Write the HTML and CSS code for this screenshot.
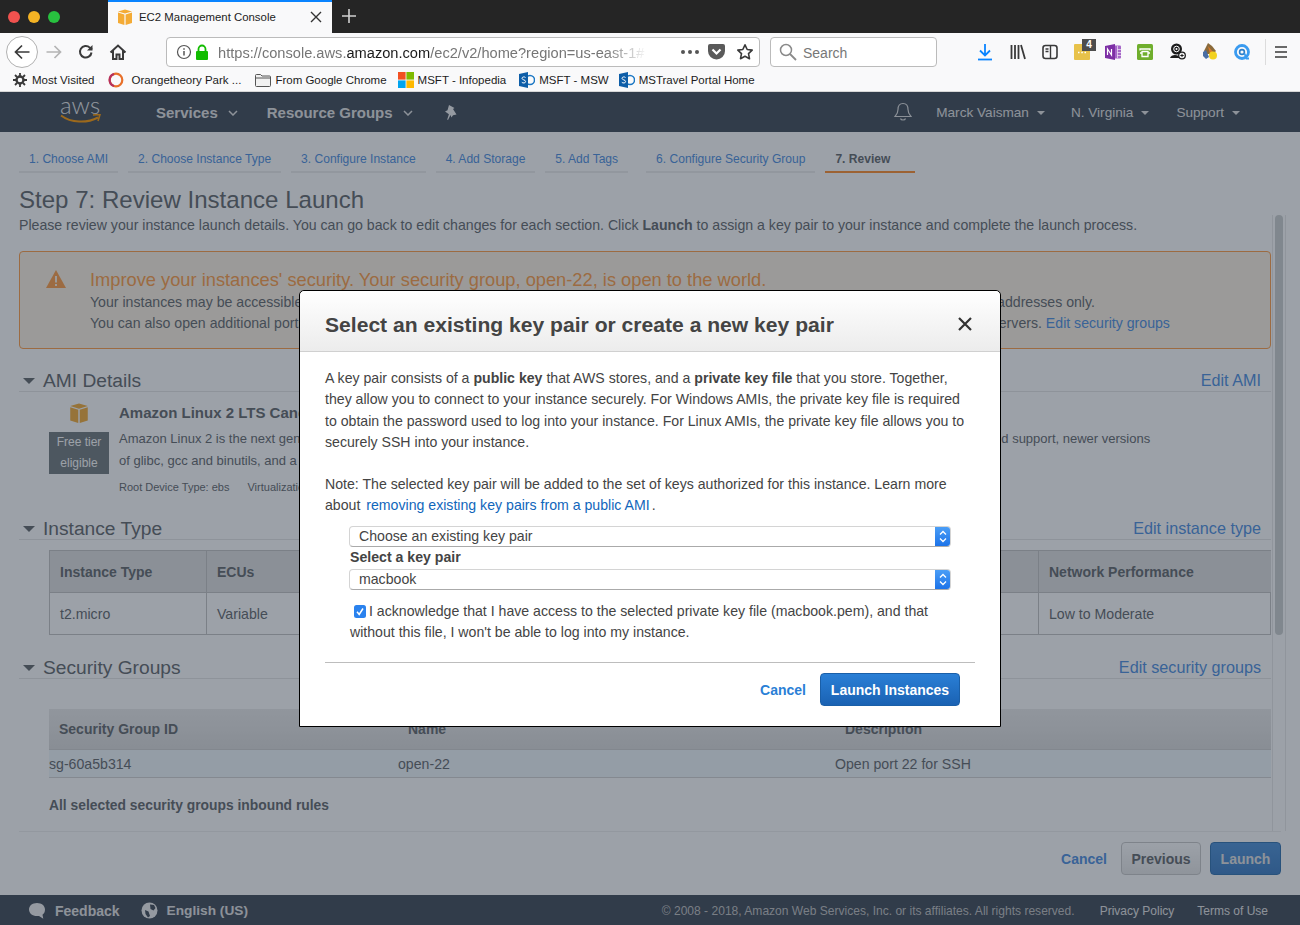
FILE: index.html
```html
<!DOCTYPE html>
<html lang="en">
<head>
  <meta charset="UTF-8" />
  <title>EC2 Management Console</title>
  <link rel="stylesheet" href="styles.css">
</head>
<body>
  <!-- browser chrome -->
  <div class="tabbar">
    <div class="lights"><i class="red"></i><i class="amber"></i><i class="green"></i></div>
    <div class="tab">
      <svg class="fav" width="16" height="16" viewBox="0 0 16 16"><path fill="#f4ab35" d="M8 4.6 1 2.4 8 .4l7 2zM1 3.4l6.400 2V16L1 14zM15 3.400l-6.400 2V16l6.400-2z"/></svg>
      <span class="tab-title">EC2 Management Console</span>
      <svg class="tab-close" width="12" height="12" viewBox="0 0 12 12"><path d="M1 1l10 10M11 1 1 11" stroke="#333" stroke-width="1.400"/></svg>
    </div>
    <svg class="tab-new" width="16" height="16" viewBox="0 0 16 16"><path d="M8 1v14M1 8h14" stroke="#d0d0d0" stroke-width="1.600"/></svg>
  </div>

  <div class="toolbar">
    <div class="back">
      <svg width="18" height="18" viewBox="0 0 18 18"><path d="M16.500 9H2.500M9 2.500 2.500 9 9 15.500" fill="none" stroke="#3a3a3a" stroke-width="1.700"/></svg>
    </div>
    <svg class="nav-icon" width="18" height="18" viewBox="0 0 18 18"><path d="M1.500 9h14M9.500 3l6 6-6 6" fill="none" stroke="#b4b4b4" stroke-width="1.700"/></svg>
    <svg class="nav-icon" width="18" height="18" viewBox="0 0 18 18"><path d="M14.500 9.500A5.800 5.800 0 1 1 12.800 4.600L15 6.500" fill="none" stroke="#3a3a3a" stroke-width="2"/><path d="M15.500 2v5.500H10z" fill="#3a3a3a"/></svg>
    <svg class="nav-icon" width="18" height="18" viewBox="0 0 18 18"><path d="M1.500 9.500 9 2.500l7.500 7M4 7.500V16h3.500v-4.500h3V16H14V7.500" fill="none" stroke="#3a3a3a" stroke-width="2"/></svg>
    <div class="urlbar">
      <svg width="16" height="16" viewBox="0 0 16 16"><circle cx="8" cy="8" r="6.500" fill="none" stroke="#555" stroke-width="1.200"/><path d="M8 7v4.500M8 4.200v1.600" stroke="#555" stroke-width="1.500"/></svg>
      <svg class="lock" width="14" height="16" viewBox="0 0 14 16"><rect x="1" y="7" width="12" height="9" rx="1" fill="#12bc00"/><path d="M3.500 7.500V5a3.500 3.500 0 0 1 7 0v2.500" fill="none" stroke="#12bc00" stroke-width="1.800"/></svg>
      <div class="url">https://console.aws.<b>amazon.com</b>/ec2/v2/home?region=us-east-1#</div>
      <div class="dots"><i></i><i></i><i></i></div>
      <svg class="pocket" width="17" height="16" viewBox="0 0 17 16"><path fill="#5a5a5a" d="M2 0h13a2 2 0 0 1 2 2v5a8.500 8.500 0 0 1-17 0V2a2 2 0 0 1 2-2z"/><path d="M4.500 5.500l4 4 4-4" fill="none" stroke="#fff" stroke-width="2.200"/></svg>
      <svg class="star" width="18" height="18" viewBox="0 0 18 18"><path d="M9 1.800l2.200 4.700 5 .6-3.700 3.500 1 5.100L9 13.200l-4.500 2.500 1-5.100L1.800 7.100l5-.6z" fill="none" stroke="#3a3a3a" stroke-width="1.600" stroke-linejoin="round"/></svg>
    </div>
    <div class="searchbar">
      <svg width="18" height="18" viewBox="0 0 18 18"><circle cx="7" cy="7" r="5.500" fill="none" stroke="#8a8a8a" stroke-width="1.500"/><path d="M11 11l6 6" stroke="#8a8a8a" stroke-width="1.800"/></svg>
      <span>Search</span>
    </div>
    <div class="extensions">
      <svg width="16" height="18" viewBox="0 0 16 18"><path d="M8 1v11M3 7.500l5 5 5-5" fill="none" stroke="#0a84ff" stroke-width="1.800"/><path d="M1 16.500h14" stroke="#0a84ff" stroke-width="1.800"/></svg>
      <svg class="library" width="16" height="16" viewBox="0 0 16 16"><path d="M1.500 1v14M5 1v14M8.500 1v14M11 1l4 14" fill="none" stroke="#3a3a3a" stroke-width="1.800"/></svg>
      <svg width="16" height="16" viewBox="0 0 16 16"><rect x="1" y="1.500" width="14" height="13" rx="2.500" fill="none" stroke="#3a3a3a" stroke-width="1.600"/><path d="M8.500 2v12M3.500 5h3M3.500 7.500h3" stroke="#3a3a3a" stroke-width="1.400"/></svg>
      <div class="ext-badged">
        <svg width="16" height="16" viewBox="0 0 16 16"><rect width="16" height="16" rx="1" fill="#e8c24a"/><path d="M4 8.500h1.500M7.300 8.500h1.500M10.500 8.500H12" stroke="#fff" stroke-width="1.500"/></svg>
        <span class="badge">4</span>
      </div>
      <svg class="onenote" width="16" height="16" viewBox="0 0 16 16"><path fill="#a667c8" d="M9 1.500h6a1 1 0 0 1 1 1v11a1 1 0 0 1-1 1H9z"/><path fill="#7d2fa5" d="M0 2l10-2v16L0 14z"/><path d="M12.500 2v12M12.500 5.500H16M12.500 8.500H16M12.500 11.500H16" stroke="#fff" stroke-width=".6"/><path d="M2.500 11V5l4 6V5" fill="none" stroke="#fff" stroke-width="1.200"/></svg>
      <svg width="16" height="16" viewBox="0 0 16 16"><rect width="16" height="16" rx="1.500" fill="#6fae2c"/><path d="M3 6.500V5h10v1.500M5 7.500h6v5H5zM3 9h2M11 9h2" fill="none" stroke="#fff" stroke-width="1.300"/></svg>
      <svg width="17" height="17" viewBox="0 0 17 17"><circle cx="7.500" cy="6" r="5.500" fill="#1c1c1c"/><circle cx="7.500" cy="6" r="2.800" fill="none" stroke="#fff" stroke-width="1"/><circle cx="7.500" cy="6" r="1" fill="#fff"/><path d="M1 15c1-4 9-4 10 0z" fill="#1c1c1c"/><circle cx="13" cy="12.500" r="3.300" fill="#fff" stroke="#1c1c1c" stroke-width="1.300"/><path d="M13 10.800v3.400M11.300 12.500h3.400" stroke="#1c1c1c" stroke-width="1"/></svg>
      <svg width="16" height="17" viewBox="0 0 16 17"><path fill="#8a6a3a" d="M6 0l4 3 4 5-3 3H4L2 8z"/><path fill="#4a6fa5" d="M1 9l3-2 3 7-3 2-3-3z"/><path fill="#d9792b" d="M6 3l5 6-3 2z"/><circle cx="11" cy="12.500" r="4" fill="#f3d21f"/></svg>
      <svg width="16" height="16" viewBox="0 0 16 16"><circle cx="8" cy="8" r="6.500" fill="none" stroke="#3a9bf0" stroke-width="2.800"/><circle cx="8" cy="8" r="2.400" fill="none" stroke="#2d7fc9" stroke-width="1.600"/><path d="M10.500 9.500l2 5H15" stroke="#3a9bf0" stroke-width="1.800" fill="none"/></svg>
      <i class="ext-sep"></i>
      <svg width="14" height="14" viewBox="0 0 14 14"><path d="M1 2h12M1 7h12M1 12h12" stroke="#3a3a3a" stroke-width="1.700"/></svg>
    </div>
  </div>

  <div class="bookmarks">
    <a class="mark"><svg width="14" height="14" viewBox="0 0 14 14"><circle cx="7" cy="7" r="3.500" fill="none" stroke="#3a3a3a" stroke-width="2.400"/><path d="M7 0v3M7 11v3M0 7h3M11 7h3M2 2l2 2M10 10l2 2M12 2l-2 2M4 10l-2 2" stroke="#3a3a3a" stroke-width="1.800"/></svg>Most Visited</a>
    <a class="mark"><svg width="16" height="16" viewBox="0 0 16 16"><circle cx="8" cy="8" r="6.300" fill="none" stroke="#e8702a" stroke-width="2.200"/><path d="M6 14A6.300 6.300 0 0 1 6 2" fill="none" stroke="#b5305f" stroke-width="2.200"/></svg>Orangetheory Park ...</a>
    <a class="mark"><svg width="16" height="14" viewBox="0 0 16 14"><path d="M.5 2.500a1 1 0 0 1 1-1h4l1.500 1.500h7.500a1 1 0 0 1 1 1v8.500a1 1 0 0 1-1 1h-13a1 1 0 0 1-1-1z" fill="#f1f1f1" stroke="#555"/><path d="M.5 5h15" stroke="#555"/></svg>From Google Chrome</a>
    <a class="mark"><svg width="16" height="16" viewBox="0 0 16 16"><path fill="#f25022" d="M0 0h7.600v7.600H0z"/><path fill="#7fba00" d="M8.400 0H16v7.600H8.400z"/><path fill="#00a4ef" d="M0 8.400h7.600V16H0z"/><path fill="#ffb900" d="M8.400 8.400H16V16H8.400z"/></svg>MSFT - Infopedia</a>
    <a class="mark"><svg width="16" height="16" viewBox="0 0 16 16"><circle cx="11" cy="8" r="4.500" fill="none" stroke="#1b77c4" stroke-width="1.500"/><path fill="#0e5ea8" d="M0 2l9-2v16l-9-2z"/><path d="M6.500 5.500C5.500 4.500 3 4.800 3 6.300c0 1.900 3.600 1.200 3.600 3.300 0 1.600-2.700 1.800-3.800.7" fill="none" stroke="#fff" stroke-width="1"/></svg>MSFT - MSW</a>
    <a class="mark"><svg width="16" height="16" viewBox="0 0 16 16"><circle cx="11" cy="8" r="4.500" fill="none" stroke="#1b77c4" stroke-width="1.500"/><path fill="#0e5ea8" d="M0 2l9-2v16l-9-2z"/><path d="M6.500 5.500C5.500 4.500 3 4.800 3 6.300c0 1.900 3.600 1.200 3.600 3.300 0 1.600-2.700 1.800-3.800.7" fill="none" stroke="#fff" stroke-width="1"/></svg>MSTravel Portal Home</a>
  </div>

  <!-- console -->
  <div class="console">
    <header class="aws-nav">
      <div class="aws-logo">
        <span>aws</span>
        <svg width="42" height="11" viewBox="0 0 42 11"><path d="M1 1.500c10 7.500 26 8 37 2" fill="none" stroke="#ff9900" stroke-width="2"/><path d="M33 1l7-.5-2 6.500" fill="none" stroke="#ff9900" stroke-width="1.600"/></svg>
      </div>
      <a class="nav-main services">Services</a>
      <svg class="chev" width="10" height="6" viewBox="0 0 10 6"><path d="M1 1l4 4 4-4" fill="none" stroke="currentColor" stroke-width="1.500"/></svg>
      <a class="nav-main groups">Resource Groups</a>
      <svg class="chev" width="10" height="6" viewBox="0 0 10 6"><path d="M1 1l4 4 4-4" fill="none" stroke="currentColor" stroke-width="1.500"/></svg>
      <svg class="pin" width="14" height="15" viewBox="0 0 14 15"><path fill="#f2f2f2" d="M5 0l5.500 3-1.500 1 3.500 5.500-3.500.7-1.500 2.300L6.500 10 4 15l-.8-.5 1.700-5.300L1 6.500l2.500-1.200z"/></svg>
      <div class="nav-right">
        <svg class="bell" width="18" height="20" viewBox="0 0 18 20"><path d="M9 1.500c-3.500 0-5 2.500-5 6 0 3-1 5-3 7h16c-2-2-3-4-3-7 0-3.500-1.500-6-5-6zM6.500 16.500c.5 2 4.500 2 5 0" fill="none" stroke="#e0e0e0" stroke-width="1.200"/></svg>
        <a class="nav-sub user">Marck Vaisman<i class="caret"></i></a>
        <a class="nav-sub region">N. Virginia<i class="caret"></i></a>
        <a class="nav-sub">Support<i class="caret"></i></a>
      </div>
    </header>

    <main class="content">
      <nav class="wizard">
        <a>1. Choose AMI</a>
        <a>2. Choose Instance Type</a>
        <a>3. Configure Instance</a>
        <a>4. Add Storage</a>
        <a>5. Add Tags</a>
        <a>6. Configure Security Group</a>
        <a class="active">7. Review</a>
      </nav>

      <h1>Step 7: Review Instance Launch</h1>
      <p class="intro">Please review your instance launch details. You can go back to edit changes for each section. Click <b>Launch</b> to assign a key pair to your instance and complete the launch process.</p>

      <div class="warning">
        <svg class="warn-icon" width="20" height="18" viewBox="0 0 20 18"><path fill="#ff9d45" d="M10 0 20 18H0z"/><path d="M10 6v6.500M10 14v2" stroke="#fdf3e3" stroke-width="2"/></svg>
        <div class="warn-text">
          <div class="warn-title">Improve your instances' security. Your security group, open-22, is open to the world.</div>
          <div>Your instances may be accessible from any IP address. We recommend that you update your security group rules to allow access from known IP addresses only.</div>
          <div>You can also open additional ports in your security group to facilitate access to the application or service you're running, e.g., HTTP (80) for web servers. <a>Edit security groups</a></div>
        </div>
      </div>

      <section class="section ami">
        <div class="section-head"><i class="tri"></i><h2>AMI Details</h2><a>Edit AMI</a></div>
        <div class="ami-body">
          <div class="ami-side">
            <svg width="20" height="20" viewBox="0 0 16 16"><path fill="#f4ab35" d="M8 4.600 1 2.400 8 .4l7 2zM1 3.400l6.400 2V16L1 14zM15 3.400l-6.400 2V16l6.400-2z"/></svg>
            <div class="free-tier">Free tier<br>eligible</div>
          </div>
          <div class="ami-info">
            <div class="ami-title">Amazon Linux 2 LTS Candidate AMI</div>
            <div class="ami-desc">
              <div>Amazon Linux 2 is the next generation of Amazon Linux, a Linux server operating system from Amazon. It provides a stable, secure platform with extended support, newer versions</div>
              <div>of glibc, gcc and binutils, and a modern toolchain.</div>
            </div>
            <div class="ami-meta"><span>Root Device Type: ebs</span><span>Virtualization type: hvm</span></div>
          </div>
        </div>
      </section>

      <section class="section type">
        <div class="section-head"><i class="tri"></i><h2>Instance Type</h2><a>Edit instance type</a></div>
        <div class="itable">
          <div class="th">Instance Type</div><div class="th">ECUs</div><div class="th">vCPUs</div><div class="th">Memory (GiB)</div><div class="th">Instance Storage (GB)</div><div class="th">EBS-Optimized</div><div class="th">Network Performance</div>
          <div class="td">t2.micro</div><div class="td">Variable</div><div class="td">1</div><div class="td">1</div><div class="td">EBS only</div><div class="td">-</div><div class="td">Low to Moderate</div>
        </div>
      </section>

      <section class="section groups-sec">
        <div class="section-head"><i class="tri"></i><h2>Security Groups</h2><a>Edit security groups</a></div>
        <div class="stable">
          <div class="sh">Security Group ID</div><div class="sh">Name</div><div class="sh">Description</div>
          <div class="sd">sg-60a5b314</div><div class="sd">open-22</div><div class="sd">Open port 22 for SSH</div>
        </div>
        <div class="rules">All selected security groups inbound rules</div>
      </section>

      <div class="actions">
        <a class="cancel">Cancel</a>
        <button class="btn prev">Previous</button>
        <button class="btn launch">Launch</button>
      </div>

      <div class="scroll-track"><div class="scroll-thumb"></div></div>
    </main>

    <footer class="aws-foot">
      <svg width="18" height="18" viewBox="0 0 18 18"><path fill="#f2f2f2" d="M9 1c4.700 0 8 2.800 8 6.500 0 2.500-1 4.200-2.500 5.300l.8 4L11 14c-.6.100-1.300.1-2 .1-4.700 0-8-2.900-8-6.600S4.300 1 9 1z"/></svg>
      <a class="foot-main">Feedback</a>
      <svg class="globe" width="17" height="17" viewBox="0 0 17 17"><circle cx="8.500" cy="8.500" r="8" fill="#f2f2f2"/><path fill="#3c4754" d="M9 2.500l4 .5 1.500 3-2 2.500-3-1.500zM4 8l3.500 1.500L9 14l-2 1.500L4.500 12z"/></svg>
      <a class="foot-main">English (US)</a>
      <span class="foot-copy">© 2008 - 2018, Amazon Web Services, Inc. or its affiliates. All rights reserved.</span>
      <a class="foot-link privacy">Privacy Policy</a>
      <a class="foot-link">Terms of Use</a>
    </footer>

    <div class="overlay"></div>

    <div class="modal">
      <div class="modal-head">
        <h3>Select an existing key pair or create a new key pair</h3>
        <svg width="14" height="14" viewBox="0 0 14 14"><path d="M1 1l12 12M13 1 1 13" stroke="#333" stroke-width="2.200"/></svg>
      </div>
      <div class="modal-body">
        <p>A key pair consists of a <b>public key</b> that AWS stores, and a <b>private key file</b> that you store. Together, they allow you to connect to your instance securely. For Windows AMIs, the private key file is required to obtain the password used to log into your instance. For Linux AMIs, the private key file allows you to securely SSH into your instance.</p>
        <p class="note">Note: The selected key pair will be added to the set of keys authorized for this instance. Learn more about <a>removing existing key pairs from a public AMI</a>.</p>
        <div class="form">
          <div class="select"><span>Choose an existing key pair</span><i class="stepper"><svg width="8" height="13" viewBox="0 0 8 13"><path d="M1 4.500l3-3 3 3M1 8.500l3 3 3-3" fill="none" stroke="#fff" stroke-width="1.300"/></svg></i></div>
          <label>Select a key pair</label>
          <div class="select"><span>macbook</span><i class="stepper"><svg width="8" height="13" viewBox="0 0 8 13"><path d="M1 4.500l3-3 3 3M1 8.500l3 3 3-3" fill="none" stroke="#fff" stroke-width="1.300"/></svg></i></div>
          <p class="ack"><svg class="check" width="12" height="13" viewBox="0 0 12 13"><rect width="12" height="13" rx="2.500" fill="#2a82ee"/><path d="M3 6.800l2.200 2.700L9 3.500" fill="none" stroke="#fff" stroke-width="1.500"/></svg>I acknowledge that I have access to the selected private key file (macbook.pem), and that without this file, I won't be able to log into my instance.</p>
        </div>
        <div class="modal-foot">
          <a class="cancel">Cancel</a>
          <button class="btn launch-inst">Launch Instances</button>
        </div>
      </div>
    </div>
  </div>
</body>
</html>
```

FILE: styles.css
```css
* {
  box-sizing: border-box;
}
html, body {
  margin: 0;
  height: 925px;
  overflow: hidden;
}
body {
  font-family: "Liberation Sans", Arial, sans-serif;
  font-size: 14.130px;
  color: #444;
  background: #fff;
}
a {
  cursor: pointer;
}
svg {
  display: block;
  flex: none;
}

/* browser chrome */
.tabbar {
  height: 33px;
  background: #252525;
  display: flex;
  align-items: stretch;
}
.lights {
  width: 108px;
  padding-left: 8px;
  display: flex;
  align-items: center;
  gap: 8px;
}
.lights i {
  width: 12px;
  height: 12px;
  border-radius: 50%;
}
.lights .red { background: #f0524f; }
.lights .amber { background: #f5b324; }
.lights .green { background: #28c13f; }
.tab {
  width: 224px;
  background: #f9f9fa;
  border-top: 2px solid #0a84ff;
  display: flex;
  align-items: center;
  padding: 0 10px 2px 9px;
  color: #222;
  font-size: 11.400px;
}
.tab-title {
  margin-left: 6px;
  flex: 1;
}
.tab-new {
  margin: 8px 0 0 9px;
}
.toolbar {
  height: 34px;
  background: #f9f9fa;
  display: flex;
  align-items: center;
  padding-left: 6px;
  position: relative;
}
.back {
  width: 32px;
  height: 32px;
  margin-top: 3px;
  border: 1px solid #b1b1b1;
  border-radius: 50%;
  background: #fff;
  display: flex;
  align-items: center;
  justify-content: center;
}
.nav-icon {
  margin: 3px 0 0 14px;
}
.toolbar > .back + .nav-icon {
  margin-left: 7px;
}
.urlbar {
  width: 594px;
  height: 30px;
  margin: 4px 0 0 39px;
  background: #fff;
  border: 1px solid #bbb;
  border-radius: 4px;
  display: flex;
  align-items: center;
  padding-left: 9px;
}
.lock {
  margin-left: 3px;
}
.url {
  width: 430px;
  margin-left: 9px;
  padding-top: 2px;
  font-size: 14.640px;
  color: #767676;
  white-space: nowrap;
  overflow: hidden;
  -webkit-mask-image: linear-gradient(to right, #000 90%, transparent);
  mask-image: linear-gradient(to right, #000 90%, transparent);
}
.url b {
  font-weight: normal;
  color: #1a1a1a;
}
.dots {
  margin-left: 33px;
  display: flex;
  gap: 3px;
}
.dots i {
  width: 4px;
  height: 4px;
  border-radius: 50%;
  background: #555;
}
.pocket {
  margin-left: 9px;
}
.star {
  margin-left: 11px;
}
.searchbar {
  width: 167px;
  height: 30px;
  margin: 4px 0 0 10px;
  background: #fff;
  border: 1px solid #bbb;
  border-radius: 4px;
  display: flex;
  align-items: center;
  gap: 6px;
  padding-left: 8px;
  color: #777;
  font-size: 14px;
}
.searchbar span {
  padding-top: 2px;
}
.extensions {
  margin: 3px 0 0 40px;
  width: 320px;
  display: flex;
  align-items: center;
  gap: 16px;
}
.library {
  margin-left: 1px;
}
.onenote {
  margin-left: -1px;
}
.ext-badged {
  position: relative;
}
.badge {
  position: absolute;
  left: 8px;
  top: -5px;
  width: 14px;
  height: 12px;
  background: #4d4d4d;
  color: #fff;
  font-size: 10px;
  font-weight: bold;
  text-align: center;
  line-height: 12px;
}
.ext-sep {
  width: 1px;
  height: 26px;
  margin-left: -1px;
  background: #dcdcdc;
}
.ext-sep + svg {
  margin-left: -8px;
}
.bookmarks {
  height: 25px;
  background: #f9f9fa;
  border-bottom: 1px solid #d6d6d6;
  display: flex;
  align-items: center;
  padding: 1px 0 0 13px;
  font-size: 11.500px;
  color: #1c1c1c;
}
.mark {
  display: flex;
  align-items: center;
  gap: 4px;
}
.mark:nth-child(1) { gap: 5px; margin-right: 14px; }
.mark:nth-child(2) { gap: 7px; margin-right: 14px; }
.mark:nth-child(3) { margin-right: 11px; }
.mark:nth-child(4) { margin-right: 13px; }
.mark:nth-child(5) { margin-right: 10px; }

/* console shell */
.console {
  position: relative;
  height: 833px;
  display: flex;
  flex-direction: column;
  background: #fff;
}
.aws-nav {
  height: 40px;
  flex: none;
  background: #3c4754;
  color: #e4e4e4;
  display: flex;
  align-items: center;
  padding-left: 60px;
}
.aws-logo {
  width: 96px;
  margin-top: -3px;
}
.aws-logo span {
  display: block;
  font-family: "Lato", "Liberation Sans", sans-serif;
  font-weight: 300;
  font-size: 24px;
  line-height: 18px;
  height: 18px;
  color: #ececec;
}
.nav-main {
  font-size: 15px;
  font-weight: bold;
}
.chev {
  margin: 1px 29px 0 10px;
}
.groups + .chev {
  margin-right: 0;
}
.pin {
  margin-left: 31px;
}
.nav-right {
  margin-left: auto;
  display: flex;
  align-items: center;
  padding-right: 60px;
  font-size: 13.600px;
}
.bell {
  margin-right: 24px;
}
.nav-sub {
  display: flex;
  align-items: center;
  margin-right: 27px;
  padding-top: 1px;
}
.nav-sub.user {
  margin-right: 26px;
}
.nav-sub:last-child {
  margin-right: 0;
}
.caret {
  width: 0;
  height: 0;
  margin-left: 8px;
  border: 4px solid transparent;
  border-top-color: currentColor;
  border-bottom: 0;
}

/* page content */
.content {
  flex: 1;
  min-height: 0;
  position: relative;
  overflow: hidden;
  padding: 13px 19px 0;
  color: #62666b;
}
.content a {
  color: #4c8ee1;
}
.wizard {
  display: flex;
  gap: 10px;
  font-size: 12.050px;
}
.wizard a {
  height: 28px;
  padding: 7px 10px 0;
  border-bottom: 2px solid #ededed;
  white-space: nowrap;
}
.wizard a:nth-child(6) {
  margin-left: 8px;
}
.wizard .active {
  padding-right: 25px;
  color: #62666b;
  font-weight: bold;
  border-bottom-color: #ff8c2b;
}
h1 {
  margin: 12px 0 0;
  font-size: 24.070px;
  line-height: 29px;
  font-weight: normal;
}
.intro {
  margin: 1px 0 0;
  line-height: 20px;
  white-space: nowrap;
}
.warning {
  height: 98px;
  margin: 16px 0 0;
  width: 1252px;
  border: 1px solid #ff9d45;
  border-radius: 4px;
  background: #fdf3e3;
  display: flex;
  padding: 18px 0 0 26px;
}
.warn-text {
  margin-left: 24px;
  line-height: 21px;
  white-space: nowrap;
}
.warn-title {
  font-size: 18.270px;
  line-height: 20px;
  margin-bottom: 2px;
  color: #ff9d45;
}
.section-head {
  display: flex;
  align-items: center;
  width: 1252px;
  height: 22px;
  border-bottom: 1px solid #e6e6e6;
}
.section-head h2 {
  margin: 0 0 0 8px;
  flex: 1;
  font-size: 19.200px;
  font-weight: normal;
  color: #62666b;
}
.section-head a {
  font-size: 16.200px;
  margin-right: 10px;
}
.tri {
  width: 0;
  height: 0;
  margin-left: 4px;
  border: 6px solid transparent;
  border-top: 6px solid #62666b;
  border-bottom: 0;
}
.ami {
  margin-top: 21px;
}
.ami-body {
  display: flex;
  padding: 10px 0 0 30px;
  width: 1252px;
}
.ami-side {
  width: 60px;
  display: flex;
  flex-direction: column;
  align-items: center;
  gap: 9px;
  padding-top: 1px;
}
.free-tier {
  width: 60px;
  height: 42px;
  background: #6f787c;
  color: #fff;
  font-size: 12px;
  line-height: 21px;
  text-align: center;
}
.ami-info {
  margin-left: 10px;
  white-space: nowrap;
}
.ami-title {
  font-size: 15px;
  font-weight: bold;
  line-height: 22px;
}
.ami-desc {
  margin-top: 4px;
  font-size: 13px;
  line-height: 22px;
  white-space: nowrap;
}
.ami-meta {
  margin-top: 9px;
  font-size: 11px;
  display: flex;
  gap: 18px;
}
.type {
  margin-top: 25px;
}
.itable {
  width: 1222px;
  margin: 10px 0 0 30px;
  display: grid;
  grid-template-columns: 157px 157px 130px 150px 200px 195px 233px;
  border: 1px solid #c4c4c4;
  border-left: 0;
}
.th {
  height: 42px;
  padding: 0 10px;
  display: flex;
  align-items: center;
  background: #e0e0e0;
  border-left: 1px solid #c4c4c4;
  border-bottom: 1px solid #c4c4c4;
  font-size: 14px;
  font-weight: bold;
}
.td {
  height: 41px;
  padding: 0 10px;
  display: flex;
  align-items: center;
  border-left: 1px solid #c4c4c4;
}
.groups-sec {
  margin-top: 22px;
}
.stable {
  width: 1222px;
  margin: 30px 0 0 30px;
  display: grid;
  grid-template-columns: 349px 437px 436px;
  border-bottom: 1px solid #d4d4d4;
}
.sh {
  height: 41px;
  padding: 0 10px;
  display: flex;
  align-items: center;
  background: linear-gradient(#ebebeb, #dcdcdc);
  border-bottom: 1px solid #cfcfcf;
  font-size: 14px;
  font-weight: bold;
}
.sd {
  height: 27px;
  display: flex;
  align-items: center;
  background: #f0f7fb;
}
.rules {
  margin: 19px 0 0 30px;
  font-size: 13.850px;
  line-height: 16px;
  font-weight: bold;
}
.actions {
  width: 1262px;
  margin-top: 18px;
  padding-top: 10px;
  border-top: 1px solid #eee;
  display: flex;
  align-items: center;
  justify-content: flex-end;
}
.cancel {
  font-weight: bold;
  font-size: 14px;
}
.btn {
  height: 33px;
  border-radius: 4px;
  font-family: inherit;
  font-size: 14px;
  font-weight: bold;
}
.prev {
  width: 80px;
  margin-left: 14px;
  border: 1px solid #c9c9c9;
  background: linear-gradient(#fff, #e8e8e8);
  color: #62666b;
}
.launch {
  width: 71px;
  margin-left: 9px;
  border: 1px solid #2d6fb0;
  background: linear-gradient(#4a90d8, #3a7cc4);
  color: #e4e4e4;
}
.scroll-track {
  position: absolute;
  left: 1272px;
  top: 83px;
  width: 14px;
  height: 616px;
  padding: 0 2px;
  border-left: 1px solid #eaeaea;
  border-right: 1px solid #eaeaea;
}
.scroll-thumb {
  width: 8px;
  height: 420px;
  border-radius: 4px;
  background: #cdd0cf;
}
.aws-foot {
  height: 30px;
  flex: none;
  background: #3c4754;
  color: #e4e4e4;
  display: flex;
  align-items: center;
  padding: 1px 32px 0 28px;
}
.foot-main {
  margin-left: 9px;
  font-size: 14px;
  font-weight: bold;
}
.globe {
  margin-left: 21px;
}
.globe + .foot-main {
  font-size: 13.700px;
}
.foot-copy {
  margin-left: auto;
  font-size: 12.050px;
  color: #c0c0c0;
}
.foot-link {
  font-size: 12px;
}
.privacy {
  margin: 0 23px 0 25px;
}

/* dimming layer and dialog */
.overlay {
  position: absolute;
  inset: 0;
  background: rgba(35, 47, 62, .45);
}
.modal {
  position: absolute;
  left: 299px;
  top: 198px;
  width: 702px;
  height: 437px;
  background: #fff;
  border: 1px solid #000;
  border-radius: 5px 5px 0 0;
  color: #444;
}
.modal-head {
  height: 61px;
  padding: 8px 28px 0 25px;
  display: flex;
  align-items: center;
  justify-content: space-between;
  border-bottom: 1px solid #d0d0d0;
  border-radius: 5px 5px 0 0;
  background: linear-gradient(#fff, #ececec);
}
.modal-head h3 {
  margin: 0;
  font-size: 21.100px;
  color: #444;
}
.modal-head svg {
  margin-top: -2px;
}
.modal-body {
  padding: 16px 25px 0;
  line-height: 21.300px;
}
.modal-body p {
  margin: 0;
}
.modal-body a {
  color: #1166bb;
}
.note {
  margin-top: 21px !important;
}
.note a {
  margin: 0 2px;
}
.form {
  margin: 9px 25px 0 24px;
}
.select {
  height: 21px;
  width: 602px;
  background: #fff;
  border: 1px solid #d4d4d4;
  border-bottom-color: #aaa;
  border-radius: 4px;
  display: flex;
  align-items: center;
  justify-content: space-between;
  padding-left: 9px;
  overflow: hidden;
}
.stepper {
  width: 16px;
  height: 21px;
  margin-right: -1px;
  background: linear-gradient(#4da0f7, #1a71e8);
  display: flex;
  align-items: center;
  justify-content: center;
}
.form label {
  display: block;
  height: 22px;
  margin-left: 1px;
  font-weight: bold;
}
.ack {
  margin: 11px 0 0 1px !important;
  width: 600px;
}
.check {
  display: inline-block;
  vertical-align: -2px;
  margin: 0 3px 0 4px;
}
.modal-foot {
  margin-top: 19px;
  padding: 10px 15px 0 0;
  border-top: 1px solid #bdbdbd;
  display: flex;
  align-items: center;
  justify-content: flex-end;
}
.modal-foot .cancel {
  padding-top: 1px;
  color: #2a7fd6;
}
.launch-inst {
  width: 140px;
  margin-left: 14px;
  border: 1px solid #1a5fa8;
  background: linear-gradient(#2a7fd6, #1a62b3);
  color: #fff;
}
```
